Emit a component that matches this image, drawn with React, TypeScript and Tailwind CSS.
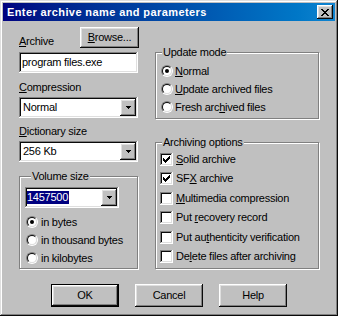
import React from "react";

// win98-style bevels
const raised =
  "shadow-[inset_-1px_-1px_#0a0a0a,inset_1px_1px_#ffffff,inset_-2px_-2px_#808080,inset_2px_2px_#dfdfdf]";
const sunken =
  "shadow-[inset_-1px_-1px_#ffffff,inset_1px_1px_#808080,inset_-2px_-2px_#dfdfdf,inset_2px_2px_#0a0a0a]";

function Acc({ t, i }: { t: string; i: number }) {
  if (i < 0) return <>{t}</>;
  return (
    <>
      {t.slice(0, i)}
      <span className="underline underline-offset-[1px]">{t[i]}</span>
      {t.slice(i + 1)}
    </>
  );
}

function Group({ title, className, children }: { title: string; className: string; children: React.ReactNode }) {
  return (
    <div className={`border border-[#808080] shadow-[inset_1px_1px_#ffffff,1px_1px_#ffffff] ${className}`}>
      <div className="-mt-[7px] ml-[6px] w-fit bg-[#c0c0c0] px-[1px]">{title}</div>
      {children}
    </div>
  );
}

function Arrow() {
  return (
    <svg width="5" height="3" viewBox="0 0 5 3" shapeRendering="crispEdges">
      <path d="M0 0h5v1h-5zM1 1h3v1h-3zM2 2h1v1h-1z" fill="#000" />
    </svg>
  );
}

function Combo({ width, children, textPad }: { width: string; children: React.ReactNode; textPad: string }) {
  return (
    <div className={`h-[21px] bg-white p-[2px] flex ${sunken} ${width}`}>
      <div className={`flex-1 flex items-center ${textPad}`}>{children}</div>
      <div className={`w-[16px] bg-[#c0c0c0] flex items-center justify-center ${raised}`}>
        <Arrow />
      </div>
    </div>
  );
}

function Radio({ on }: { on?: boolean }) {
  return (
    <span className="w-[12px] h-[12px] shrink-0 rounded-full border border-t-[#808080] border-l-[#808080] border-b-white border-r-white">
      <span className="w-full h-full rounded-full border border-t-[#0a0a0a] border-l-[#0a0a0a] border-b-[#dfdfdf] border-r-[#dfdfdf] bg-white flex items-center justify-center">
        {on && <span className="w-[4px] h-[4px] rounded-full bg-black" />}
      </span>
    </span>
  );
}

function Check({ on }: { on?: boolean }) {
  return (
    <span className={`w-[13px] h-[13px] shrink-0 bg-white flex items-center justify-center ${sunken}`}>
      {on && (
        <svg width="7" height="7" viewBox="0 0 7 7" shapeRendering="crispEdges">
          <path
            d="M6 0h1v1h-1zM5 1h2v1h-2zM0 2h1v1h-1zM4 2h3v1h-3zM0 3h2v1h-2zM3 3h3v1h-3zM0 4h5v1h-5zM1 5h3v1h-3zM2 6h1v1h-1z"
            fill="#000"
          />
        </svg>
      )}
    </span>
  );
}

const updateModes = [
  { t: "Normal", i: 0, on: true },
  { t: "Update archived files", i: 0 },
  { t: "Fresh archived files", i: 9 },
];

const options = [
  { t: "Solid archive", i: 0, on: true },
  { t: "SFX archive", i: 2, on: true },
  { t: "Multimedia compression", i: 0 },
  { t: "Put recovery record", i: 4 },
  { t: "Put authenticity verification", i: 6 },
  { t: "Delete files after archiving", i: 2 },
];

const units = ["in bytes", "in thousand bytes", "in kilobytes"];

export default function App() {
  return (
    <div className="w-[338px] h-[316px] bg-[#c0c0c0] p-[3px] flex flex-col text-black font-['Liberation_Sans',Arial,sans-serif] text-[11px] leading-[13px] tracking-[-0.25px] shadow-[inset_-1px_-1px_#0a0a0a,inset_1px_1px_#dfdfdf,inset_-2px_-2px_#808080,inset_2px_2px_#ffffff]">
      {/* title bar */}
      <div className="h-[18px] flex items-center pl-[4px] pr-[2px] bg-linear-to-r from-[#000080] to-[#1084d0]">
        <span className="text-white font-bold tracking-[0.4px]">Enter archive name and parameters</span>
        <div className={`ml-auto w-[16px] h-[14px] bg-[#c0c0c0] flex items-center justify-center ${raised}`}>
          <svg width="8" height="7" viewBox="0 0 8 7" shapeRendering="crispEdges">
            <path
              d="M0 0h2v1h-2zM6 0h2v1h-2zM1 1h2v1h-2zM5 1h2v1h-2zM2 2h4v1h-4zM3 3h2v1h-2zM2 4h4v1h-4zM1 5h2v1h-2zM5 5h2v1h-2zM0 6h2v1h-2zM6 6h2v1h-2z"
              fill="#000"
            />
          </svg>
        </div>
      </div>

      <div className="flex pl-[16px] pt-[6px]">
        {/* left column */}
        <div className="w-[120px] flex flex-col">
          <div className="h-[21px] flex items-end justify-between">
            <span>
              <Acc t="Archive" i={0} />
            </span>
            <button className={`w-[59px] h-[21px] bg-[#c0c0c0] ${raised}`}>
              <Acc t="Browse..." i={0} />
            </button>
          </div>
          <div className={`mt-[4px] w-[119px] h-[21px] bg-white pl-[3px] flex items-center ${sunken}`}>
            program files.exe
          </div>
          <div className="mt-[8px]">
            <Acc t="Compression" i={0} />
          </div>
          <div className="mt-[3px]">
            <Combo width="w-[119px]" textPad="pl-[2px]">Normal</Combo>
          </div>
          <div className="mt-[7px]">
            <Acc t="Dictionary size" i={0} />
          </div>
          <div className="mt-[3px]">
            <Combo width="w-[119px]" textPad="pl-[2px]">256 Kb</Combo>
          </div>

          <Group title="Volume size" className="mt-[14px] w-[119px] pl-[5px] pb-[1px]">
            <div className="mt-[4px]">
              <Combo width="w-[94px]" textPad="pl-0">
                <span className="bg-[#000080] text-white pr-[1px]">1457500</span>
              </Combo>
            </div>
            <div className="mt-[5px] flex flex-col">
              {units.map((u, k) => (
                <div key={u} className="h-[18px] flex items-center gap-[3px] pl-[1px]">
                  <Radio on={k === 0} />
                  <span>{u}</span>
                </div>
              ))}
            </div>
          </Group>
        </div>

        {/* right column */}
        <div className="w-[164px] ml-[16px] flex flex-col">
          <Group title="Update mode" className="mt-[25px] pb-[2px]">
            <div className="mt-[3px] flex flex-col">
              {updateModes.map((m) => (
                <div key={m.t} className="h-[18px] flex items-center gap-[2px] pl-[5px]">
                  <Radio on={m.on} />
                  <span>
                    <Acc t={m.t} i={m.i} />
                  </span>
                </div>
              ))}
            </div>
          </Group>

          <Group title="Archiving options" className="mt-[23px] pb-[2px]">
            <div className="mt-[1px] flex flex-col">
              {options.map((o, k) => (
                <div
                  key={o.t}
                  className={`flex items-center gap-[3px] pl-[4px] ${k === 2 || k === 4 ? "h-[20px]" : "h-[19px]"}`}
                >
                  <Check on={o.on} />
                  <span>
                    <Acc t={o.t} i={o.i} />
                  </span>
                </div>
              ))}
            </div>
          </Group>
        </div>
      </div>

      {/* dialog buttons */}
      <div className="mt-[15px] pl-[48px] flex gap-[16px]">
        <button className={`w-[68px] h-[23px] bg-[#c0c0c0] border border-black ${raised}`}>OK</button>
        <button className={`w-[68px] h-[23px] bg-[#c0c0c0] ${raised}`}>Cancel</button>
        <button className={`w-[68px] h-[23px] bg-[#c0c0c0] ${raised}`}>Help</button>
      </div>
    </div>
  );
}
